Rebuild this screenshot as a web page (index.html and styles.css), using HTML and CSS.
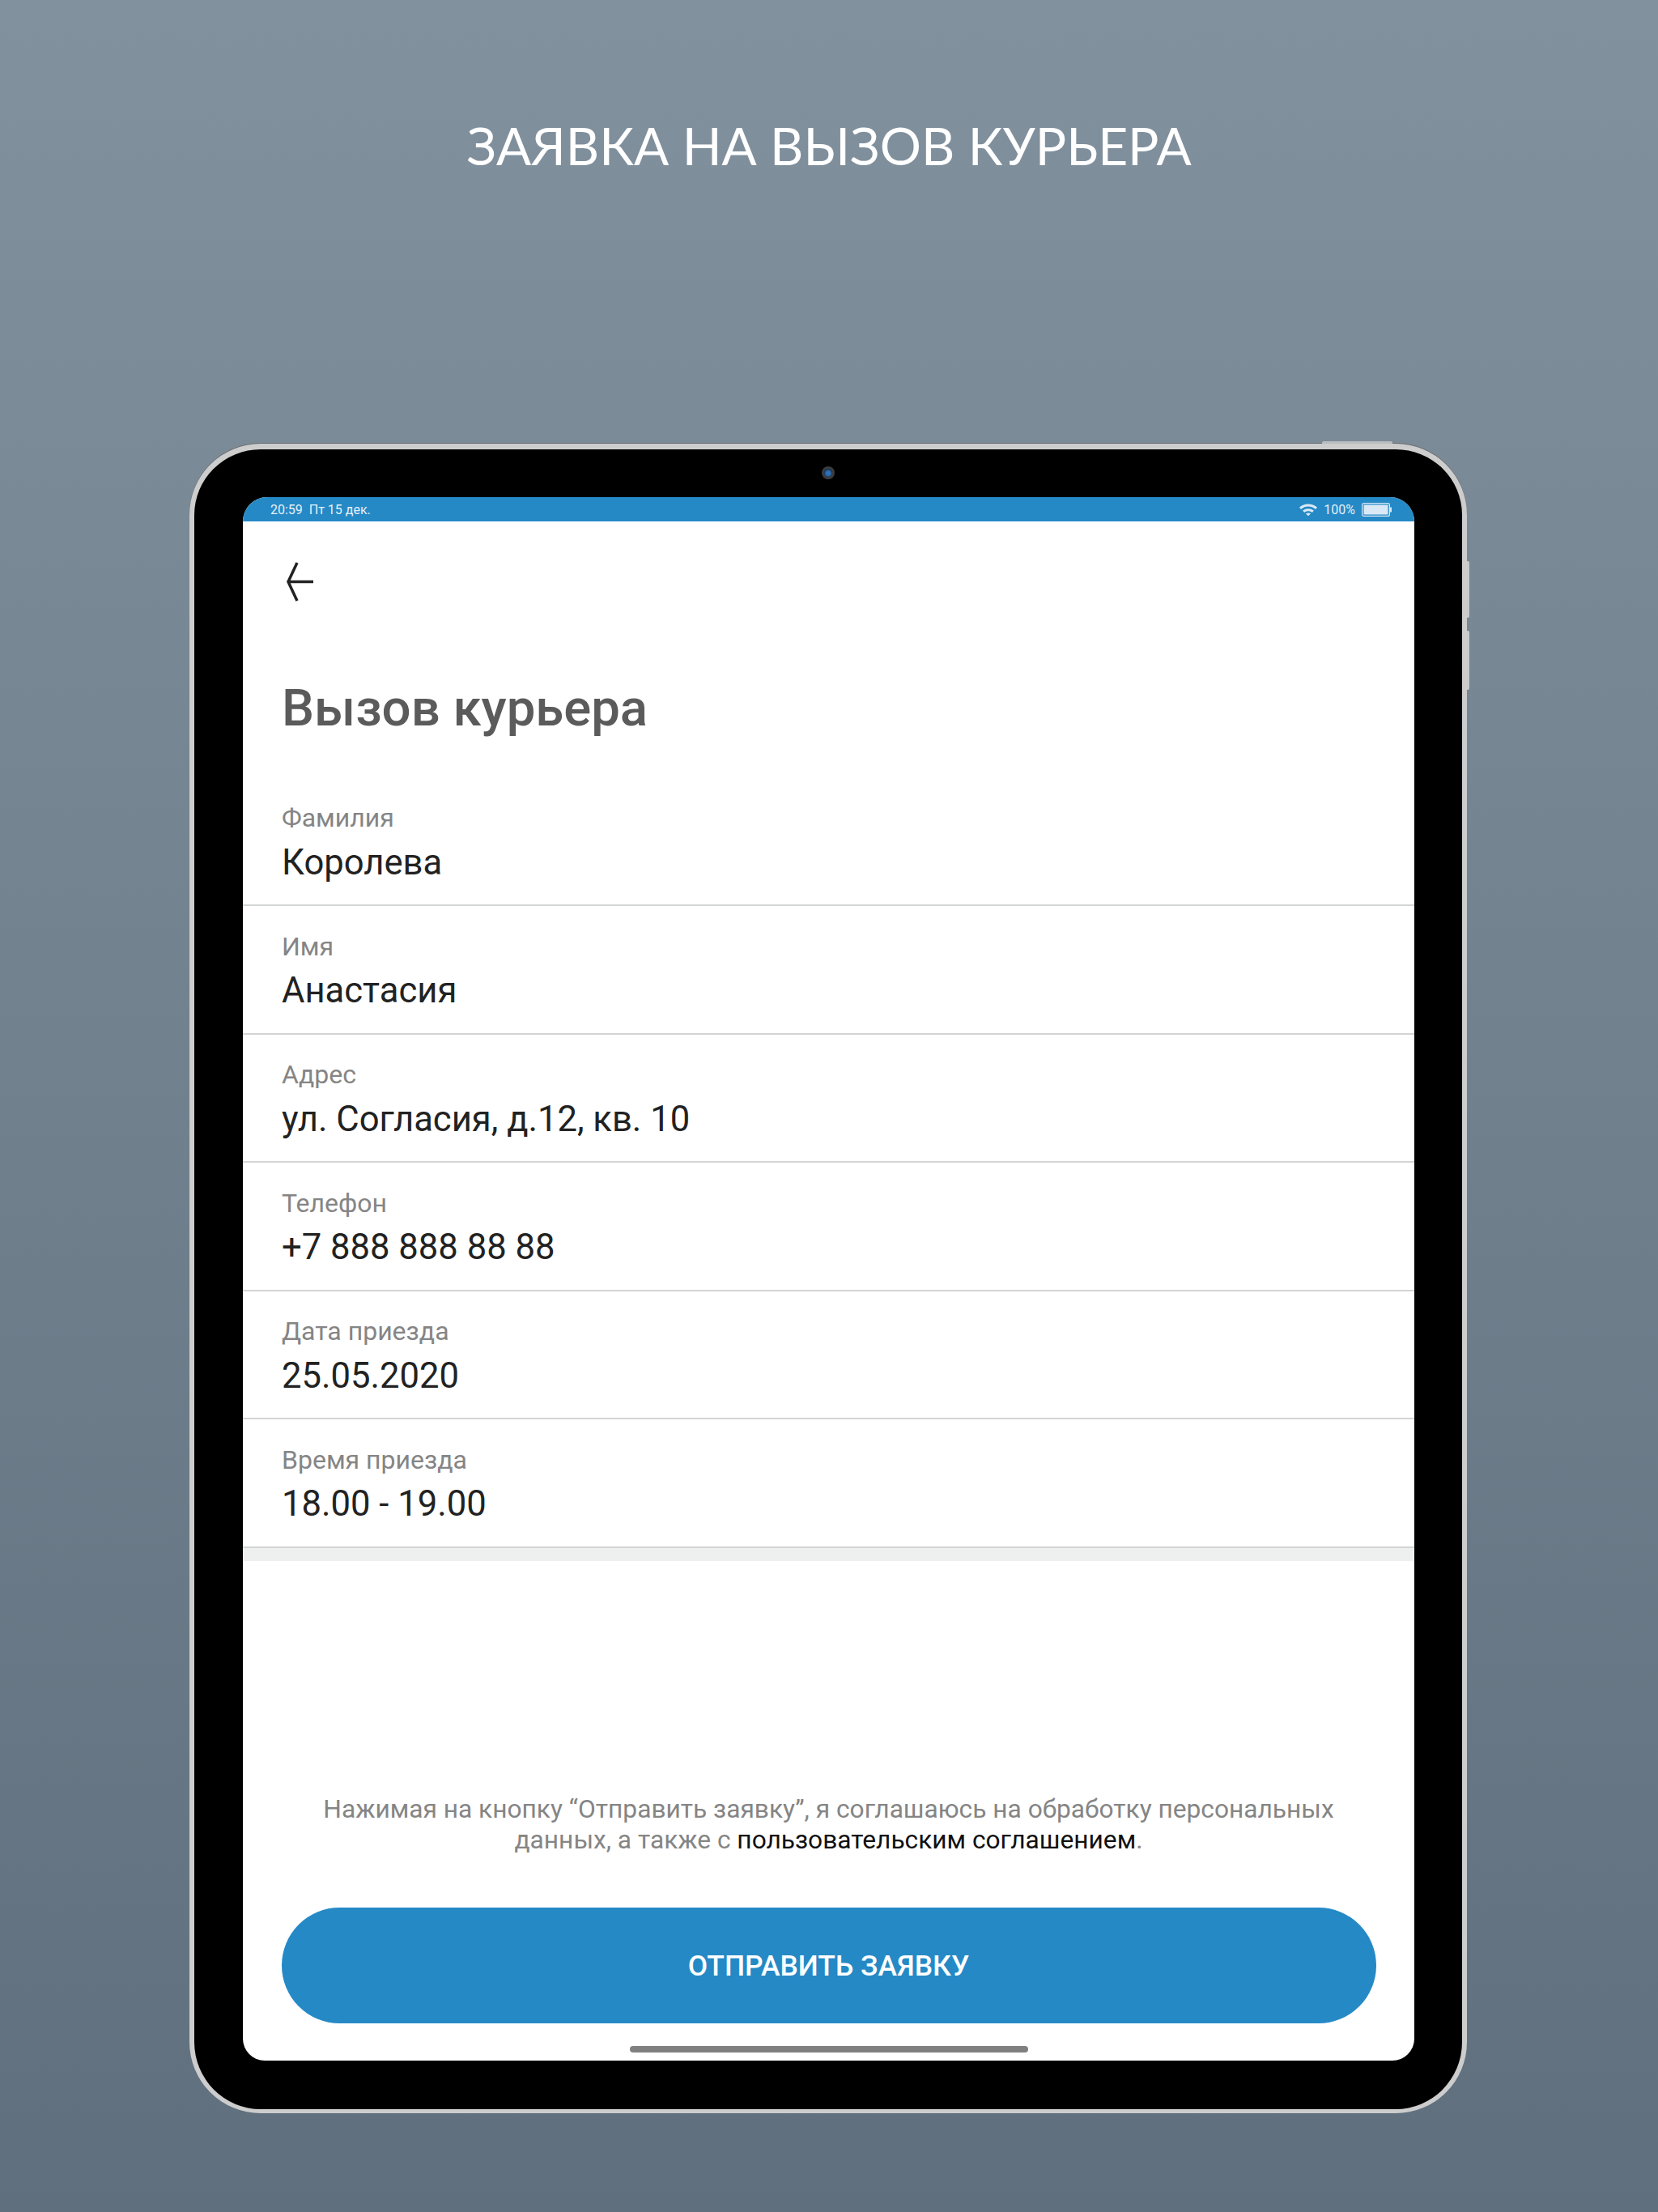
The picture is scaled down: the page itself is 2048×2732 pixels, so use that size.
FILE: index.html
```html
<!DOCTYPE html>
<html lang="ru">
<head>
<meta charset="utf-8">
<title>Заявка на вызов курьера</title>
<link rel="stylesheet" href="styles.css">
</head>
<body>
<div class="page">
  <h1 class="headline">ЗАЯВКА НА ВЫЗОВ КУРЬЕРА</h1>
  <div class="device">
    <span class="btn-top"></span>
    <span class="btn-side btn-side-1"></span>
    <span class="btn-side btn-side-2"></span>
    <div class="bezel">
      <span class="camera"><span class="lens"></span></span>
      <div class="screen">
        <div class="statusbar">
          <span class="status-left">20:59&nbsp; Пт 15 дек.</span>
          <span class="status-right">
            <svg class="wifi" viewBox="0 0 24 16" width="24" height="16"><path d="M1 5.600C7.400.2 16.600.2 23 5.600l-2 2.300C15.500 3.400 8.500 3.400 3 7.900z" fill="#d9e9f5"/><path d="M5.100 9.600c4-3.300 9.800-3.300 13.800 0l-2 2.300c-2.900-2.300-6.900-2.300-9.800 0z" fill="#d9e9f5"/><path d="M9 13.400c1.800-1.300 4.200-1.300 6 0l-3 3z" fill="#d9e9f5"/></svg>
            <span class="pct">100%</span>
            <svg class="battery" viewBox="0 0 37 17" width="37" height="17"><rect x=".6" y=".6" width="33.800" height="15.800" rx="2" fill="none" stroke="#d9e9f5" stroke-width="1.200"/><rect x="2.500" y="2.500" width="30" height="12" fill="#d9e9f5"/><rect x="35" y="5.500" width="2" height="6" fill="#d9e9f5"/></svg>
          </span>
        </div>
        <div class="toolbar">
          <svg class="back" viewBox="0 0 36 52" width="36" height="52"><path d="M14 3 3 26.500 14 50M3 26.500H34" fill="none" stroke="#222" stroke-width="3.500"/></svg>
        </div>
        <h2 class="title">Вызов курьера</h2>
        <div class="form">
          <div class="field"><span class="label">Фамилия</span><span class="value">Королева</span></div>
          <div class="field"><span class="label">Имя</span><span class="value">Анастасия</span></div>
          <div class="field"><span class="label">Адрес</span><span class="value">ул. Согласия, д.12, кв. 10</span></div>
          <div class="field"><span class="label">Телефон</span><span class="value">+7 888 888 88 88</span></div>
          <div class="field"><span class="label">Дата приезда</span><span class="value">25.05.2020</span></div>
          <div class="field"><span class="label">Время приезда</span><span class="value">18.00 - 19.00</span></div>
        </div>
        <div class="form-end"></div>
        <div class="footer">
          <p class="terms">Нажимая на кнопку “Отправить заявку”, я соглашаюсь на обработку персональных<br>данных, а также с <span class="terms-link">пользовательским соглашением</span>.</p>
          <div class="submit">ОТПРАВИТЬ ЗАЯВКУ</div>
          <div class="home-indicator"></div>
        </div>
      </div>
    </div>
  </div>
</div>
</body>
</html>
```

FILE: styles.css
```css
* { box-sizing: border-box; }
html, body { margin: 0; padding: 0; }
body {
  width: 2048px;
  height: 2732px;
  overflow: hidden;
  font-family: Roboto, "Noto Sans", sans-serif;
  background: linear-gradient(180deg, #82919e 0%, #5f6f7d 100%);
}
.page {
  width: 2048px;
  height: 2732px;
  display: flex;
  flex-direction: column;
  align-items: flex-start;
}
.headline {
  margin: 0;
  width: 100%;
  height: 548px;
  padding-top: 136px;
  text-align: center;
  font-family: Lato, sans-serif;
  font-weight: 400;
  font-size: 64px;
  line-height: 88px;
  color: #fff;
}
.device {
  position: relative;
  margin-left: 234px;
  width: 1578px;
  height: 2062px;
  border: 6px solid #cdcdcd;
  border-top-width: 7px;
  border-bottom-width: 5px;
  border-radius: 88px;
  background: #000;
  box-shadow: 0 -1px 0 #6a6e72;
}
.btn-top {
  position: absolute;
  left: 1393px;
  top: -10px;
  width: 87px;
  height: 3px;
  background: #b9bdc0;
  border-radius: 2px 2px 0 0;
}
.btn-side {
  position: absolute;
  right: -9px;
  width: 3px;
  background: #c9cacb;
  border-radius: 0 2px 2px 0;
}
.btn-side-1 { top: 138px; height: 70px; }
.btn-side-2 { top: 224px; height: 73px; }
.bezel {
  width: 100%;
  height: 100%;
  padding: 59px 59px 60px 60px;
  position: relative;
}
.camera {
  position: absolute;
  left: 775px;
  top: 21px;
  width: 16px;
  height: 16px;
  border-radius: 50%;
  background: #3a3d40;
  display: flex;
  align-items: center;
  justify-content: center;
}
.lens {
  width: 10px;
  height: 10px;
  border-radius: 50%;
  background: radial-gradient(circle at 50% 55%, #2f6fb5 0 35%, #0c1c30 80%);
}
.screen {
  width: 100%;
  height: 100%;
  background: #fff;
  border-radius: 30px 30px 27px 27px;
  overflow: hidden;
  display: flex;
  flex-direction: column;
}
.statusbar {
  flex: none;
  height: 30px;
  background: #2589c6;
  display: flex;
  align-items: center;
  justify-content: space-between;
  padding: 0 28px 0 34px;
  font-size: 16px;
  color: #e4eff8;
}
.status-right {
  display: flex;
  align-items: center;
}
.wifi { margin-right: 7px; }
.pct { margin-right: 8px; }
.toolbar {
  flex: none;
  height: 148px;
  padding: 48px 0 0 53px;
}
.back { display: block; }
.title {
  margin: 0;
  flex: none;
  height: 168.500px;
  padding: 47px 0 0 48px;
  font-size: 63.500px;
  line-height: 72px;
  font-weight: 500;
  color: #5b5b5b;
}
.form { flex: none; }
.field {
  height: 158.600px;
  border-bottom: 2px solid #d3d5d5;
  padding: 31.500px 0 0 48px;
  display: flex;
  flex-direction: column;
}
.label {
  font-size: 32px;
  line-height: 36px;
  color: #858585;
}
.value {
  font-size: 43.600px;
  line-height: 52px;
  margin-top: 11.500px;
  color: #222;
}
.form-end {
  flex: none;
  height: 16px;
  background: #eef0f0;
}
.footer {
  flex: 1;
  display: flex;
  flex-direction: column;
  justify-content: flex-end;
  align-items: center;
}
.terms {
  margin: 0 0 64px;
  text-align: center;
  font-size: 31.700px;
  line-height: 38px;
  color: #858585;
}
.terms-link { color: #111; }
.submit {
  width: 1352px;
  height: 143px;
  border-radius: 72px;
  background: #2589c6;
  color: #fff;
  font-size: 35.400px;
  font-weight: 500;
  display: flex;
  align-items: center;
  justify-content: center;
}
.home-indicator {
  width: 492px;
  height: 8px;
  margin: 28px 0 10px;
  border-radius: 4px;
  background: #808080;
}
```
